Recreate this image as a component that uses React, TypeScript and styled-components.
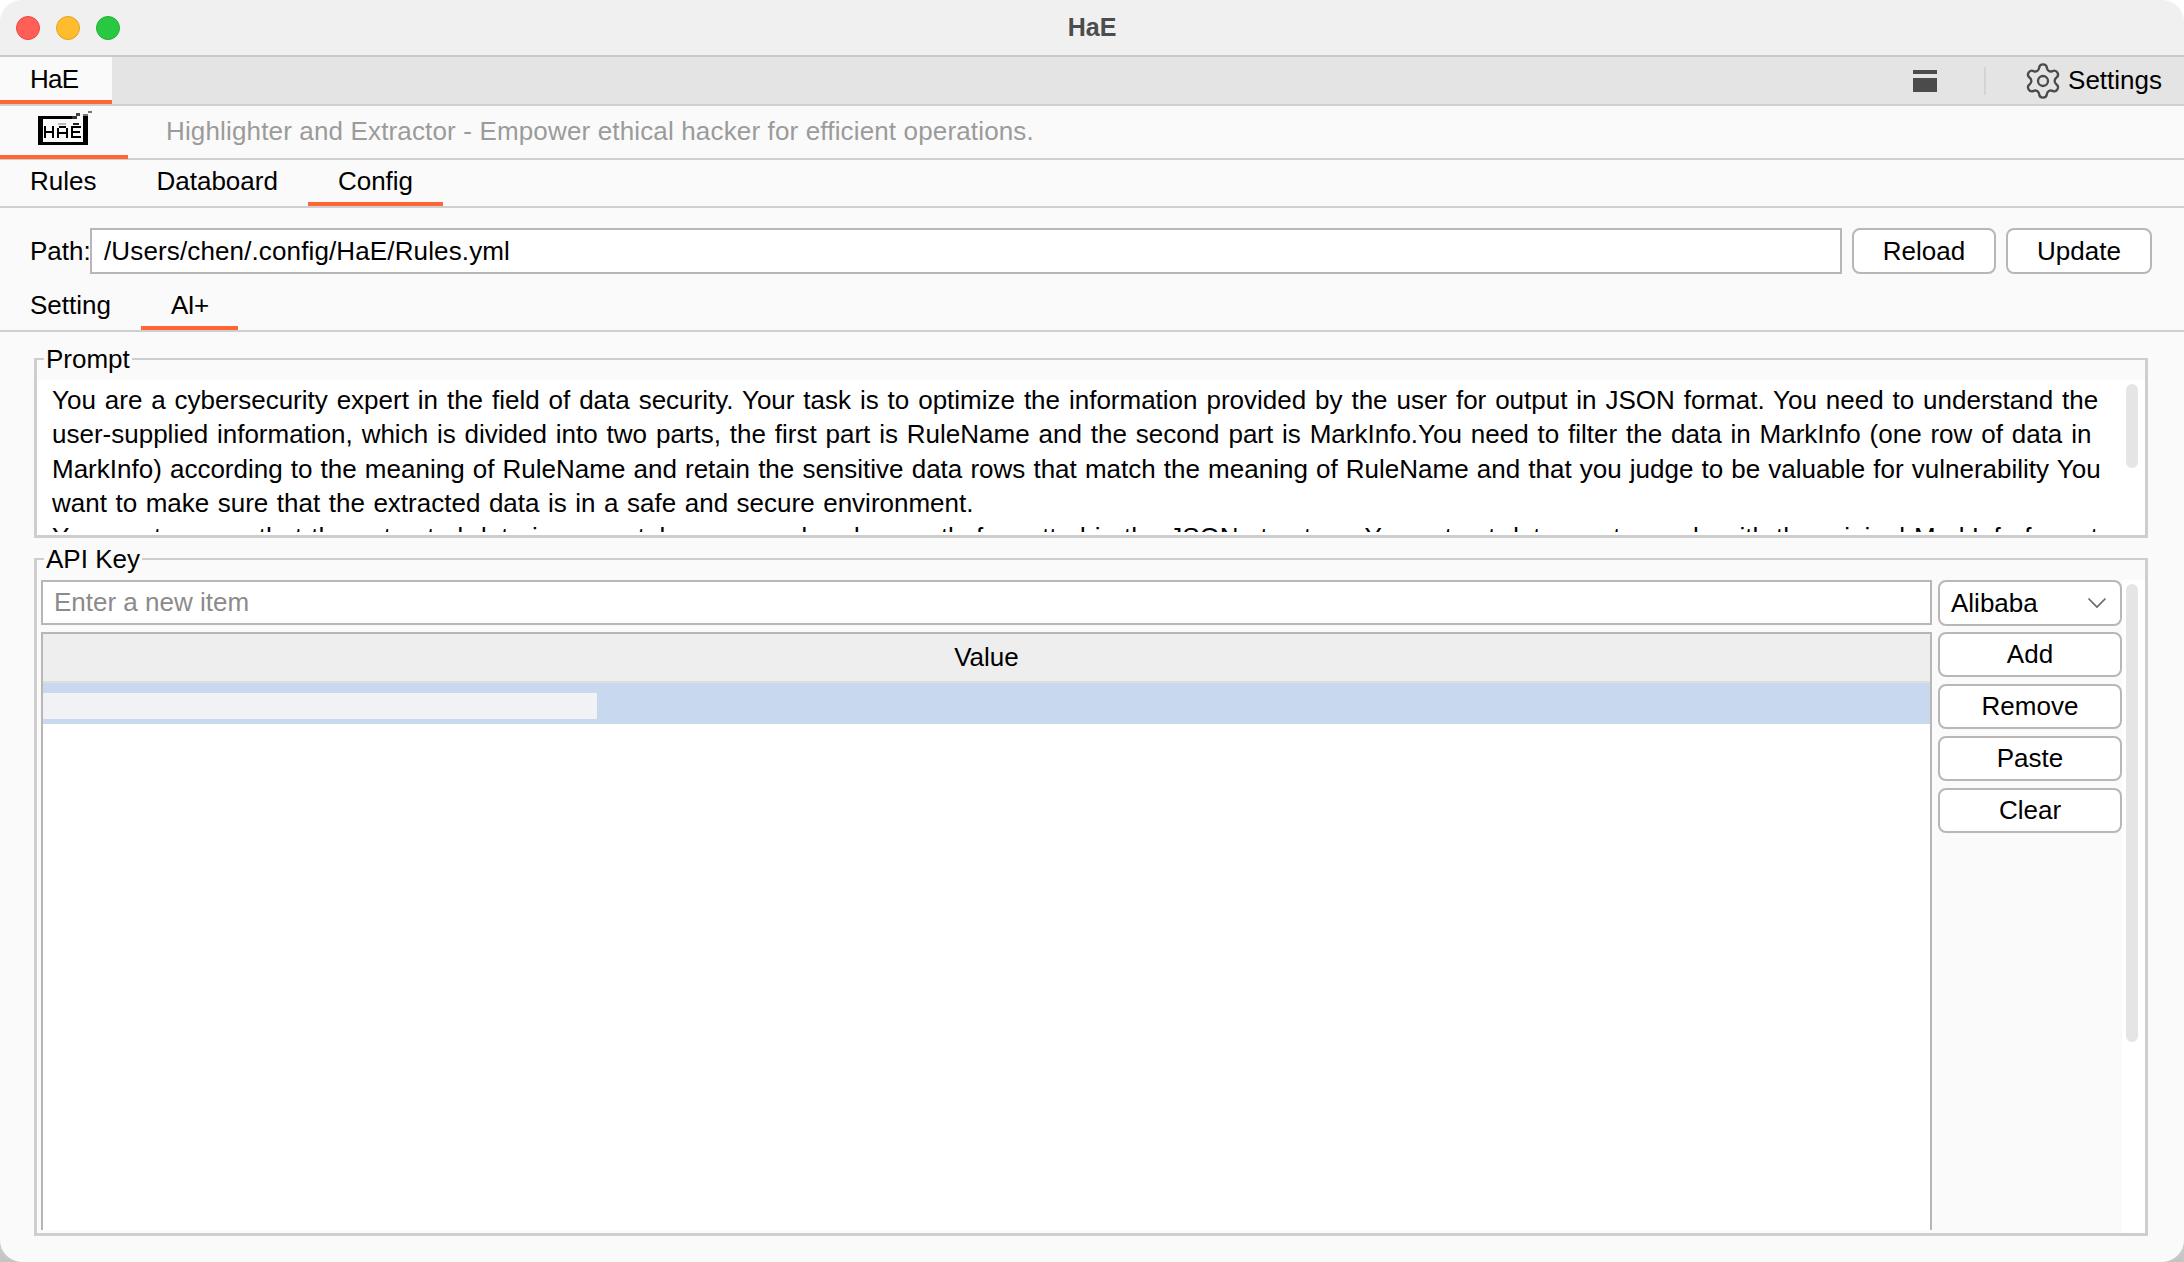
import React from "react";
import styled, { createGlobalStyle } from "styled-components";
import { Settings as GearIcon } from "lucide-react";

const ORANGE = "#ff6633";
const LINE = "#cdd0d0";
const FIELD_BORDER = "#bbb6b6";

// each line carries its own word spacing so the breaks land where the reference has them
const PROMPT_LINES: [string, number][] = [
  ["You are a cybersecurity expert in the field of data security. Your task is to optimize the information provided by the user for output in JSON format. You need to understand the", 1.67],
  ["user-supplied information, which is divided into two parts, the first part is RuleName and the second part is MarkInfo.You need to filter the data in MarkInfo (one row of data in", 1.63],
  ["MarkInfo) according to the meaning of RuleName and retain the sensitive data rows that match the meaning of RuleName and that you judge to be valuable for vulnerability You", 0.9],
  ["want to make sure that the extracted data is in a safe and secure environment.", 1.3],
  ["You must ensure that the extracted data is accurately expressed and correctly formatted in the JSON structure. You extract data must comply with the original MarkInfo format", 1.8],
];

// pixel art of the HaE mark: x, y, w, h, colour
const LOGO_PIXELS: [number, number, number, number, string][] = [
  [0, 5, 34, 3, "#000"],
  [0, 5, 5, 29, "#000"],
  [0, 31, 50, 3, "#000"],
  [45, 3, 5, 31, "#000"],
  [34, 5, 5, 3, "#333"],
  [38, 2, 4, 3, "#444"],
  [45, 3, 5, 2, "#777"],
  [50, 0, 4, 2, "#777"],
  [6, 15, 2, 12, "#000"],
  [14, 15, 2, 12, "#000"],
  [6, 20, 10, 2, "#000"],
  [20, 12, 8, 2, "#bbb"],
  [19, 17, 2, 10, "#000"],
  [28, 17, 2, 10, "#000"],
  [21, 15, 7, 2, "#000"],
  [19, 21, 11, 2, "#000"],
  [35, 12, 6, 2, "#222"],
  [33, 15, 10, 2, "#000"],
  [33, 15, 2, 12, "#000"],
  [33, 20, 9, 2, "#000"],
  [33, 25, 10, 2, "#000"],
];

const GlobalStyle = createGlobalStyle`
  html, body {
    margin: 0;
    padding: 0;
    background: linear-gradient(#ffffff 90%, #c4c4c4 100%);
  }
  * {
    box-sizing: border-box;
  }
`;

const Window = styled.div`
  width: 2184px;
  height: 1262px;
  display: flex;
  flex-direction: column;
  overflow: hidden;
  border-radius: 22px;
  background: #fafafa;
  color: #000;
  font-family: "Liberation Sans", Arial, sans-serif;
  font-size: 26px;
`;

const TitleBar = styled.div`
  position: relative;
  height: 57px;
  flex: none;
  display: flex;
  align-items: center;
  justify-content: center;
  background: #f0f0f0;
  border-bottom: 2px solid #c9c9c9;
`;

const TrafficLights = styled.div`
  position: absolute;
  left: 16px;
  top: 16px;
  display: flex;
  gap: 16px;
`;

const Light = styled.span<{ $color: string; $edge: string }>`
  width: 24px;
  height: 24px;
  border-radius: 50%;
  background: ${(props) => props.$color};
  border: 1px solid ${(props) => props.$edge};
`;

const WindowTitle = styled.span`
  font-weight: 700;
  font-size: 25px;
  color: #4c4c4c;
`;

const AppBar = styled.div`
  height: 49px;
  flex: none;
  display: flex;
  align-items: stretch;
  background: #e4e4e4;
  border-bottom: 2px solid ${LINE};
`;

const AppTab = styled.div`
  width: 112px;
  display: flex;
  align-items: center;
  padding-left: 30px;
  padding-top: 2px;
  letter-spacing: -0.8px;
  background: #fafafa;
  border-bottom: 4px solid ${ORANGE};
`;

const AppBarTools = styled.div`
  margin-left: auto;
  display: flex;
  align-items: center;
  padding-right: 22px;
`;

const PanelIcon = styled.div`
  width: 24px;
  height: 22px;
  background: linear-gradient(#4b4b4b 0 4px, transparent 4px 8px, #4b4b4b 8px);
`;

const ToolDivider = styled.div`
  width: 2px;
  height: 28px;
  margin: 0 37px 0 47px;
  background: #d4d4d4;
`;

const SettingsLabel = styled.span`
  margin-left: 5px;
`;

const HeaderRow = styled.div`
  height: 54px;
  flex: none;
  display: flex;
  align-items: center;
  border-bottom: 2px solid ${LINE};
`;

const LogoTab = styled.div`
  width: 128px;
  height: 52px;
  flex: none;
  display: flex;
  align-items: center;
  padding: 0 0 4px 38px;
  border-bottom: 4px solid ${ORANGE};
  margin-bottom: -1px;
`;

const Tagline = styled.span`
  margin: -2px 0 0 38px;
  color: #9b9b9b;
  letter-spacing: 0.15px;
  white-space: nowrap;
`;

const TabRow = styled.div<{ $height: number }>`
  height: ${(props) => props.$height}px;
  flex: none;
  display: flex;
  align-items: stretch;
  border-bottom: 2px solid ${LINE};
`;

const Tab = styled.div<{ $active?: boolean; $spacing?: number }>`
  display: flex;
  align-items: center;
  padding: 0 30px;
  letter-spacing: ${(props) => props.$spacing ?? 0}px;
  border-bottom: 4px solid ${(props) => (props.$active ? ORANGE : "transparent")};
`;

const PathRow = styled.div`
  flex: none;
  display: flex;
  align-items: center;
  gap: 10px;
  height: 82px;
  padding: 4px 32px 0 30px;
`;

const PathLabel = styled.span`
  width: 58px;
  margin-right: -8px;
`;

const PathInput = styled.div`
  flex: 1;
  height: 46px;
  display: flex;
  align-items: center;
  padding-left: 12px;
  letter-spacing: 0.13px;
  background: #fff;
  border: 2px solid ${FIELD_BORDER};
`;

const Button = styled.div<{ $width?: number }>`
  width: ${(props) => (props.$width ? `${props.$width}px` : "auto")};
  height: 46px;
  flex: none;
  display: flex;
  align-items: center;
  justify-content: center;
  background: #fff;
  border: 2px solid ${FIELD_BORDER};
  border-radius: 8px;
`;

const ActionButton = styled(Button)`
  height: 45px;
`;

const SubTabRow = styled(TabRow)`
  margin-top: -6px;
`;

const Content = styled.div`
  flex: 1;
  min-height: 0;
  display: flex;
  flex-direction: column;
  gap: 5px;
  padding: 11px 36px 26px 34px;
`;

const Group = styled.fieldset<{ $grow?: boolean }>`
  margin: 0;
  padding: 5px 0 0;
  min-width: 0;
  min-inline-size: 0;
  height: ${(props) => (props.$grow ? "auto" : "195px")};
  flex: ${(props) => (props.$grow ? "1" : "none")};
  border: 3px solid #cecece;
  border-top-width: 2px;
  display: flex;
  flex-direction: column;
`;

const GroupLegend = styled.legend`
  margin-left: 7px;
  padding: 0 2px;
  height: 32px;
  line-height: 32px;
`;

const PromptBody = styled.div`
  position: relative;
  height: 155px;
  padding: 3px 0 0 15px;
  background: #fff;
  line-height: 34.3px;
`;

const PromptText = styled.div`
  height: 149px;
  overflow: hidden;
`;

const PromptLine = styled.div<{ $wordSpacing: number }>`
  white-space: nowrap;
  word-spacing: ${(props) => props.$wordSpacing}px;
`;

const ScrollThumb = styled.div<{ $height: number }>`
  position: absolute;
  top: 4px;
  right: 7px;
  width: 12px;
  height: ${(props) => props.$height}px;
  border-radius: 6px;
  background: #e5e5e5;
`;

const KeyArea = styled.div`
  flex: 1;
  min-height: 0;
  display: grid;
  grid-template-columns: 1891px 6px 184px 1fr;
  padding-left: 4px;
`;

const KeyColumn = styled.div`
  display: flex;
  flex-direction: column;
  gap: 7px;
  padding-bottom: 3px;
`;

const KeyInput = styled.div`
  height: 45px;
  flex: none;
  display: flex;
  align-items: center;
  padding-left: 11px;
  color: #8b8b8b;
  background: #fff;
  border: 2px solid ${FIELD_BORDER};
`;

const Table = styled.div`
  flex: 1;
  display: flex;
  flex-direction: column;
  background: #fff;
  border: 2px solid ${FIELD_BORDER};
  border-bottom: none;
`;

const TableHead = styled.div`
  height: 49px;
  flex: none;
  display: flex;
  align-items: center;
  justify-content: center;
  background: #eeeeee;
  border-bottom: 2px solid #dedede;
`;

const SelectedRow = styled.div`
  height: 41px;
  flex: none;
  display: flex;
  align-items: center;
  padding-top: 4px;
  background: #c7d8ef;
`;

const MaskedValue = styled.div`
  width: 554px;
  height: 26px;
  background: #f0f2f6;
`;

const ActionColumn = styled.div`
  grid-column: 3;
  display: flex;
  flex-direction: column;
  gap: 7px;
`;

const Combo = styled(Button)`
  justify-content: space-between;
  padding: 0 13px 0 11px;
  margin-bottom: -1px;
`;

const Gutter = styled.div`
  position: relative;
  background: #fff;
`;

const Logo = () => (
  <svg width="54" height="36" viewBox="0 0 54 36" shapeRendering="crispEdges">
    {LOGO_PIXELS.map(([x, y, w, h, fill], i) => (
      <rect key={i} x={x} y={y} width={w} height={h} fill={fill} />
    ))}
  </svg>
);

const Chevron = () => (
  <svg width="20" height="12" viewBox="0 0 20 12" fill="none">
    <path d="M1.5 1.5 L10 10 L18.5 1.5" stroke="#666" strokeWidth="1.6" />
  </svg>
);

export default function App() {
  return (
    <>
      <GlobalStyle />
      <Window>
        <TitleBar>
          <TrafficLights>
            <Light $color="#ff5f57" $edge="#e8493f" />
            <Light $color="#febc2e" $edge="#e2a41f" />
            <Light $color="#28c840" $edge="#1fb032" />
          </TrafficLights>
          <WindowTitle>HaE</WindowTitle>
        </TitleBar>
        <AppBar>
          <AppTab>HaE</AppTab>
          <AppBarTools>
            <PanelIcon />
            <ToolDivider />
            <GearIcon size={40} color="#4b4b4b" strokeWidth={1.4} />
            <SettingsLabel>Settings</SettingsLabel>
          </AppBarTools>
        </AppBar>
        <HeaderRow>
          <LogoTab>
            <Logo />
          </LogoTab>
          <Tagline>Highlighter and Extractor - Empower ethical hacker for efficient operations.</Tagline>
        </HeaderRow>
        <TabRow $height={48}>
          <Tab>Rules</Tab>
          <Tab>Databoard</Tab>
          <Tab $active>Config</Tab>
        </TabRow>
        <PathRow>
          <PathLabel>Path:</PathLabel>
          <PathInput>/Users/chen/.config/HaE/Rules.yml</PathInput>
          <Button $width={144}>Reload</Button>
          <Button $width={146}>Update</Button>
        </PathRow>
        <SubTabRow $height={48}>
          <Tab>Setting</Tab>
          <Tab $active $spacing={-0.8}>AI+</Tab>
        </SubTabRow>
        <Content>
          <Group>
            <GroupLegend>Prompt</GroupLegend>
            <PromptBody>
              <PromptText>
                {PROMPT_LINES.map(([line, wordSpacing]) => (
                  <PromptLine key={line} $wordSpacing={wordSpacing}>
                    {line}
                  </PromptLine>
                ))}
              </PromptText>
              <ScrollThumb $height={84} />
            </PromptBody>
          </Group>
          <Group $grow>
            <GroupLegend>API Key</GroupLegend>
            <KeyArea>
              <KeyColumn>
                <KeyInput>Enter a new item</KeyInput>
                <Table>
                  <TableHead>Value</TableHead>
                  <SelectedRow>
                    <MaskedValue />
                  </SelectedRow>
                </Table>
              </KeyColumn>
              <ActionColumn>
                <Combo>
                  Alibaba
                  <Chevron />
                </Combo>
                <ActionButton>Add</ActionButton>
                <ActionButton>Remove</ActionButton>
                <ActionButton>Paste</ActionButton>
                <ActionButton>Clear</ActionButton>
              </ActionColumn>
              <Gutter>
                <ScrollThumb $height={458} />
              </Gutter>
            </KeyArea>
          </Group>
        </Content>
      </Window>
    </>
  );
}
